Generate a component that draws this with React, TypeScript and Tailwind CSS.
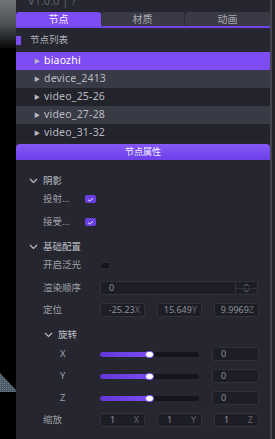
import React from "react";

const Chevron = ({ className = "" }: { className?: string }) => (
  <svg width="9" height="6" viewBox="0 0 9 6" className={className}>
    <path d="M1 1 L4.5 4.5 L8 1" fill="none" stroke="#c0c1c8" strokeWidth="1.1" />
  </svg>
);

const Check = ({ on, className = "" }: { on: boolean; className?: string }) => (
  <div className={`flex items-center justify-center rounded-[2px] ${on ? "bg-[#6a3fe3]" : "bg-[#15161c] border border-[#2c2d36]"} ${className}`}>
    {on && (
      <svg width="7" height="5" viewBox="0 0 7 5">
        <path d="M1 2.8 L2.8 4 L6 1.2" fill="none" stroke="#e8e2ff" strokeWidth="1" />
      </svg>
    )}
  </div>
);

const Box = ({ value, suffix, align = "right" }: { value: string; suffix: string; align?: "left" | "right" }) => (
  <div className="w-[45px] h-[14px] bg-[#1d1e25] border border-[#30313b] rounded-[2px] flex items-center px-[4px] text-[9px] text-[#8e8f98] overflow-hidden">
    {align === "right" ? (
      <div className="flex-1 flex justify-end items-center">
        <span>{value}</span>
        <span className="text-[#64656e]">{suffix}</span>
      </div>
    ) : (
      <div className="flex-1 flex justify-between items-center pl-[5px] pr-[1px]">
        <span>{value}</span>
        <span className="text-[#64656e]">{suffix}</span>
      </div>
    )}
  </div>
);

const SliderRow = ({ label, mt }: { label: string; mt: string }) => (
  <div className={`flex items-center h-[14px] ${mt}`}>
    <span className="ml-[44px] w-[40px] text-[9.5px] text-[#9fa0a8]">{label}</span>
    <div className="w-[99px] h-[5px] rounded-full bg-[#14141a] relative">
      <div className="h-full w-[50px] rounded-full bg-gradient-to-r from-[#6237d6] to-[#7a4cf2]" />
      <div className="absolute left-[45px] top-[-1px] w-[9px] h-[7px] rounded-full bg-white border-[1.5px] border-[#7a4cf2]" />
    </div>
    <div className="ml-[13px] w-[47px] h-[14px] bg-[#1d1e25] border border-[#30313b] rounded-[2px] flex items-center pl-[8px] text-[9px] text-[#8e8f98]">0</div>
  </div>
);

export default function App() {
  const items = [
    { name: "biaozhi", bg: "bg-[#7d4cf5]", fg: "text-white" },
    { name: "device_2413", bg: "bg-[#383a45]", fg: "text-[#b9bac2]" },
    { name: "video_25-26", bg: "bg-[#22232b]", fg: "text-[#b9bac2]" },
    { name: "video_27-28", bg: "bg-[#383a45]", fg: "text-[#b9bac2]" },
    { name: "video_31-32", bg: "bg-[#22232b]", fg: "text-[#b9bac2]" },
  ];
  return (
    <div className="flex w-[275px] h-[439px] overflow-hidden bg-black font-['Noto_Sans','Noto_Sans_CJK_SC',sans-serif]">
      <div className="w-[16px] h-full flex flex-col">
        <div className="h-[48px] bg-gradient-to-b from-[#6f7479] via-[#4d5256] to-[#0a0a0a]" />
        <div className="flex-1 bg-black flex flex-col">
          <div className="h-[325px]" />
          <svg width="16" height="24" viewBox="0 0 16 24">
            <defs>
              <pattern id="grid" width="2" height="2" patternUnits="userSpaceOnUse">
                <rect width="2" height="2" fill="#4a5866" />
                <rect width="1" height="1" fill="#6a7a88" />
              </pattern>
            </defs>
            <polygon points="0,0 16,17 16,19 0,19" fill="url(#grid)" />
          </svg>
        </div>
      </div>
      <div className="w-[254px] h-full bg-[#25262f] flex flex-col">
        <div className="h-[12px] overflow-hidden">
          <div className="mt-[-7px] pl-[12px] text-[11px] text-[#62636c]">V1.0.0 | ?</div>
        </div>
        <div className="flex h-[14px] text-[10px]">
          <div className="w-[85px] bg-[#7d4cf5] rounded-t-[3px] flex items-center justify-center text-[#f4f0ff]">节点</div>
          <div className="w-[84px] bg-[#393a45] rounded-t-[3px] flex items-center justify-center text-[#a9aab2] border-r border-[#2a2b33]">材质</div>
          <div className="flex-1 bg-[#393a45] rounded-t-[3px] flex items-center justify-center text-[#a9aab2]">动画</div>
        </div>
        <div className="h-[2px] bg-[#7045ea]" />
        <div className="h-[24px] flex items-center">
          <div className="w-[5px] h-[9px] bg-[#7d4cf5]" />
          <span className="ml-[9px] text-[9.5px] text-[#adaeb6]">节点列表</span>
        </div>
        <div className="flex flex-col">
          {items.map((it) => (
            <div key={it.name} className={`h-[18px] flex items-center ${it.bg} ${it.fg}`}>
              <span className="ml-[18px] text-[6px] text-[#b9bac2]">▶</span>
              <span className="ml-[4px] text-[10.5px] tracking-[0.2px]">{it.name}</span>
            </div>
          ))}
        </div>
        <div className="mt-[2px] h-[16px] rounded-t-[4px] bg-gradient-to-b from-[#8658f8] to-[#6c3fe8] flex items-center justify-center text-[9px] text-[#f4f0ff]">节点属性</div>

        <div className="flex flex-col">
          <div className="mt-[14px] h-[14px] flex items-center">
            <Chevron className="ml-[13px]" />
            <span className="ml-[5px] text-[9.5px] text-[#bfc0c8]">阴影</span>
          </div>
          <div className="mt-[4px] h-[14px] flex items-center">
            <span className="ml-[27px] w-[42px] text-[9.5px] text-[#9fa0a8]">投射...</span>
            <Check on className="w-[11px] h-[8px]" />
          </div>
          <div className="mt-[9px] h-[14px] flex items-center">
            <span className="ml-[27px] w-[42px] text-[9.5px] text-[#9fa0a8]">接受...</span>
            <Check on className="w-[11px] h-[8px]" />
          </div>
          <div className="mt-[11px] h-[14px] flex items-center">
            <Chevron className="ml-[13px]" />
            <span className="ml-[5px] text-[9.5px] text-[#bfc0c8]">基础配置</span>
          </div>
          <div className="mt-[4px] h-[14px] flex items-center">
            <span className="ml-[27px] w-[57px] text-[9.5px] text-[#9fa0a8]">开启泛光</span>
            <Check on={false} className="w-[10px] h-[7px]" />
          </div>
          <div className="mt-[9px] h-[14px] flex items-center">
            <span className="ml-[27px] w-[57px] text-[9.5px] text-[#9fa0a8]">渲染顺序</span>
            <div className="w-[158px] h-[14px] bg-[#1d1e25] border border-[#30313b] rounded-[2px] flex">
              <div className="flex-1 flex items-center pl-[8px] text-[9px] text-[#8e8f98]">0</div>
              <div className="w-[22px] border-l border-[#30313b] flex flex-col">
                <div className="flex-1 flex items-center justify-center border-b border-[#30313b]">
                  <svg width="7" height="4" viewBox="0 0 7 4"><path d="M1 3.5 L3.5 1 L6 3.5" fill="none" stroke="#7c7d86" strokeWidth="0.9" /></svg>
                </div>
                <div className="flex-1 flex items-center justify-center">
                  <svg width="7" height="4" viewBox="0 0 7 4"><path d="M1 0.5 L3.5 3 L6 0.5" fill="none" stroke="#7c7d86" strokeWidth="0.9" /></svg>
                </div>
              </div>
            </div>
          </div>
          <div className="mt-[8px] h-[14px] flex items-center">
            <span className="ml-[27px] w-[57px] text-[9.5px] text-[#9fa0a8]">定位</span>
            <div className="flex gap-[12px]">
              <Box value="-25.23" suffix="X" />
              <Box value="15.649" suffix="Y" />
              <Box value="9.9969" suffix="Z" />
            </div>
          </div>
          <div className="mt-[11px] h-[14px] flex items-center">
            <Chevron className="ml-[28px]" />
            <span className="ml-[5px] text-[9.5px] text-[#bfc0c8]">旋转</span>
          </div>
          <SliderRow label="X" mt="mt-[5px]" />
          <SliderRow label="Y" mt="mt-[8px]" />
          <SliderRow label="Z" mt="mt-[8px]" />
          <div className="mt-[8px] h-[14px] flex items-center">
            <span className="ml-[27px] w-[57px] text-[9.5px] text-[#9fa0a8]">缩放</span>
            <div className="flex gap-[12px]">
              <Box value="1" suffix="X" align="left" />
              <Box value="1" suffix="Y" align="left" />
              <Box value="1" suffix="Z" align="left" />
            </div>
          </div>
        </div>
      </div>
      <div className="w-[5px] h-full flex">
        <div className="w-[2px] bg-[#45464e]" />
        <div className="w-[3px] bg-[#24252b]" />
      </div>
    </div>
  );
}
